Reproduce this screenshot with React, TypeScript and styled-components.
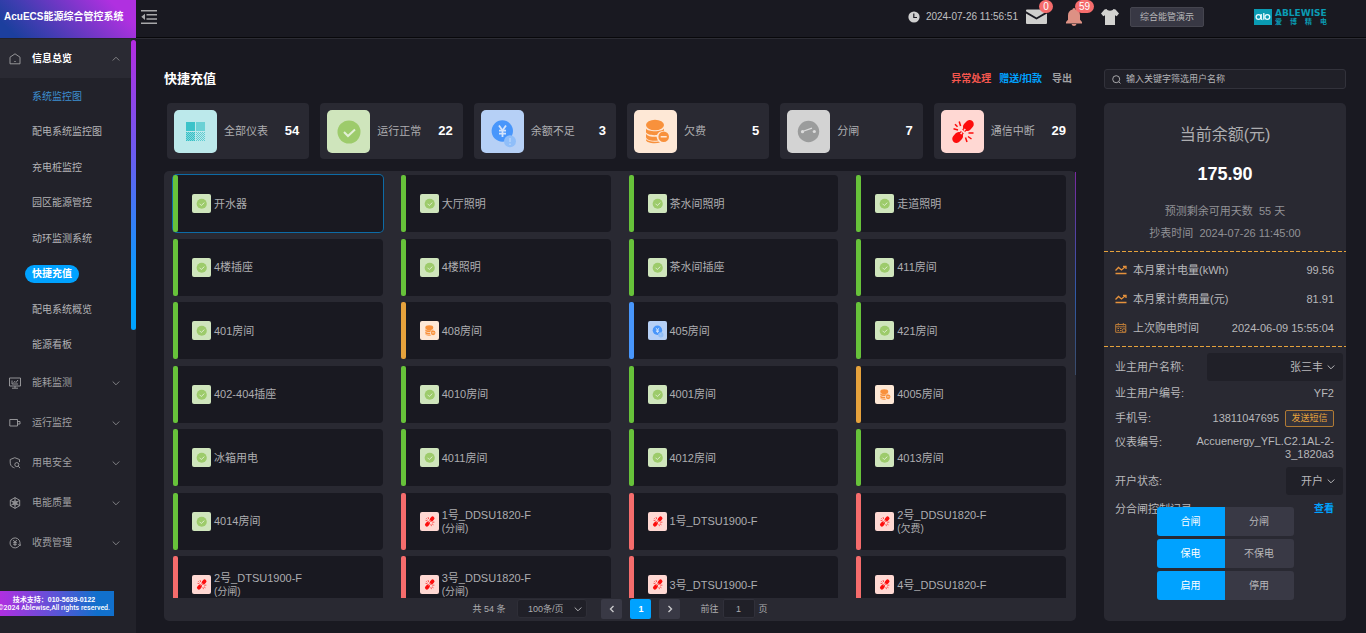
import React from "react";
import styled, { createGlobalStyle, css } from "styled-components";

type Kind = "all" | "ok" | "low" | "debt" | "open" | "lost";

const GlobalStyle = createGlobalStyle`
  *, *::before, *::after { box-sizing: border-box; }
  body {
    margin: 0;
    background: #191921;
    color: #adadb0;
    font-family: "Liberation Sans", "Noto Sans CJK SC", sans-serif;
    font-size: 11px;
    line-height: 14px;
  }
  h1, h2, p, ul, dl, dd, dt { margin: 0; padding: 0; font-weight: normal; }
  ul { list-style: none; }
  a { color: inherit; text-decoration: none; }
  button, input, select { font: inherit; color: inherit; margin: 0; padding: 0; border: 0; outline: 0; }
  button { cursor: pointer; }
  svg { display: block; flex: none; }
`;

const Shell = styled.div`
  display: grid;
  grid-template: 38px minmax(0, 1fr) / 136px minmax(0, 1fr);
  height: 100vh;
  min-height: 630px;
`;

/* Header */

const Brand = styled.h1`
  display: flex;
  align-items: center;
  padding: 0 4px 4px;
  background: linear-gradient(45deg, #1c3f9e 10%, #3f3db0 30%, #b030e0 85%);
  color: #fff;
  font-size: 10px;
  font-weight: bold;
  white-space: nowrap;
`;

const TopBar = styled.header`
  display: flex;
  align-items: center;
  padding: 0 39px 3px 5px;
  border-bottom: 1px solid #08080b;
`;

const IconButton = styled.button`
  position: relative;
  display: flex;
  align-items: center;
  height: 18px;
  background: none;
`;

const Badge = styled.span`
  position: absolute;
  left: 13px;
  top: -8px;
  min-width: 14px;
  padding: 0 4px;
  border-radius: 7px;
  background: #f56c6c;
  color: #fff;
  font-size: 10px;
  line-height: 13px;
  text-align: center;
`;

const BellBadge = styled(Badge)`
  left: 9px;
`;

const Clock = styled.time`
  display: flex;
  align-items: center;
  gap: 6px;
  margin-left: auto;
  margin-right: 8px;
  font-size: 10px;
  color: #c0c0c2;
`;

const Tools = styled.div`
  display: flex;
  align-items: center;
  gap: 19px;
`;

const Account = styled.button`
  width: 74px;
  height: 20px;
  margin: 0 50px 0 11px;
  border: 1px solid #45454f;
  border-radius: 2px;
  background: #383844;
  color: #b8b8ba;
  font-size: 9px;
  line-height: 18px;
`;

const Logo = styled.div`
  display: flex;
  align-items: center;
  gap: 3px;
  color: #0a9bb3;
`;

const LogoText = styled.div`
  width: 52px;
  font: bold 9px/9px "DejaVu Sans", sans-serif;
`;

const LogoSub = styled.div`
  display: flex;
  justify-content: space-between;
  font: bold 7px/7px "Noto Sans CJK SC", sans-serif;
`;

/* Sidebar */

const Sidebar = styled.nav`
  position: relative;
  display: flex;
  flex-direction: column;
  padding-top: 1px;
  background: #22222a;
  font-size: 10px;
`;

const SideScroll = styled.span`
  position: absolute;
  right: 0;
  top: 2px;
  width: 5px;
  height: 290px;
  border-radius: 3px;
  background: linear-gradient(#b52be0, #6a5cf0 40%, #00a2ff 85%);
`;

const Group = styled.button<{ $open?: boolean }>`
  display: grid;
  grid-template-columns: 23px 1fr 8px;
  align-items: center;
  width: 131px;
  height: ${(p) => (p.$open ? 39 : 40)}px;
  padding: 0 11px 0 9px;
  background: ${(p) => (p.$open ? "#2a2a33" : "none")};
  color: ${(p) => (p.$open ? "#fff" : "#a0a0a3")};
  font-weight: ${(p) => (p.$open ? "bold" : "normal")};
  text-align: left;
`;

const SubMenu = styled.ul`
  display: grid;
  grid-auto-rows: 1fr;
  align-items: center;
  height: 285px;
  padding: 1px 0 0 25px;
`;

const SubLink = styled.a<{ $state?: "link" | "active" }>`
  display: inline-block;
  padding: 0 7px;
  border-radius: 9px;
  line-height: 18px;
  color: #b4b4b7;
  ${(p) => p.$state === "link" && css`color: #3d8fd0;`}
  ${(p) => p.$state === "active" && css`background: #00a2ff; color: #fff; font-weight: bold;`}
`;

const Support = styled.footer`
  display: flex;
  flex-direction: column;
  align-items: center;
  width: 114px;
  margin: auto 0 17px;
  padding: 5px 6px 4px 0;
  background: linear-gradient(90deg, #b02fe0, #5a55d6 50%, #1170cc 85%);
  color: #fff;
  font-size: 7px;
  font-weight: bold;
  line-height: 8px;
  white-space: nowrap;
`;

const Rights = styled.span`
  font-family: Roboto, sans-serif;
  font-weight: 500;
`;

/* Content */

const Main = styled.main`
  display: grid;
  grid-template: 20px minmax(0, 1fr) / minmax(0, 1fr) 242px;
  gap: 14px 28px;
  padding: 30px 20px 12px 28px;
  border-top: 1px solid #2c2c34;
`;

const Heading = styled.div`
  display: flex;
  align-items: center;
  gap: 8px;
  padding-right: 4px;
`;

const Title = styled.h2`
  margin-right: auto;
  color: #fff;
  font-size: 13px;
  font-weight: bold;
`;

const Action = styled.button<{ $color: string }>`
  background: none;
  color: ${(p) => p.$color};
  font-size: 10px;
  font-weight: bold;
  &:last-child { margin-left: 2px; }
`;

const Search = styled.label`
  display: flex;
  align-items: center;
  gap: 5px;
  padding: 0 7px;
  border: 1px solid #32323b;
  border-radius: 3px;
  background: #202028;
  font-size: 9px;
  input { flex: 1; min-width: 0; background: none; }
  input::placeholder { color: #b4b4b7; opacity: 1; }
`;

const Left = styled.div`
  display: flex;
  flex-direction: column;
  gap: 12px;
  min-height: 0;
`;

const Summary = styled.ul`
  display: grid;
  grid-template-columns: repeat(6, 1fr);
  gap: 11px;
  padding-left: 3px;
`;

const SummaryCard = styled.li`
  display: flex;
  align-items: center;
  gap: 7px;
  height: 56px;
  padding: 0 10px 0 7px;
  border-radius: 4px;
  background: #292932;
  white-space: nowrap;
`;

const Count = styled.b`
  margin-left: auto;
  color: #fff;
  font-size: 13px;
`;

const tileColor: Record<Kind, string> = {
  all: "#bce9eb",
  ok: "#cfe5bc",
  low: "#b6d0f6",
  debt: "#fee8d6",
  open: "#d3d3d3",
  lost: "#ffd8d3",
};

const Tile = styled.span<{ $kind: Kind; $small?: boolean }>`
  flex: none;
  width: ${(p) => (p.$small ? 19 : 43)}px;
  height: ${(p) => (p.$small ? 19 : 43)}px;
  border-radius: ${(p) => (p.$small ? 2 : 5)}px;
  background: ${(p) => tileColor[p.$kind]};
  svg { width: 100%; height: 100%; }
`;

const Panel = styled.section`
  position: relative;
  display: flex;
  flex: 1;
  flex-direction: column;
  min-height: 0;
  border-radius: 5px;
  background: #292932;
`;

const PanelScroll = styled.span`
  position: absolute;
  right: 0;
  top: 1px;
  width: 1px;
  height: 203px;
  background: linear-gradient(#7a28a0, #2f5aa8 60%, #3a4a66);
`;

const Scroller = styled.div`
  flex: 1;
  min-height: 0;
  overflow: hidden;
  padding: 4px 10px 0 9px;
`;

const Meters = styled.ul`
  display: grid;
  grid-template-columns: repeat(4, 1fr);
  grid-template-rows: repeat(7, 57px);
  align-content: space-between;
  column-gap: 18px;
  height: 438px;
`;

const barColor: Record<Kind, string> = {
  all: "#3cc3c9",
  ok: "#67c23a",
  low: "#4896fb",
  debt: "#e6a23c",
  open: "#909399",
  lost: "#f56c6c",
};

const Meter = styled.button<{ $kind: Kind; $on?: boolean }>`
  display: flex;
  align-items: center;
  gap: 3px;
  width: 100%;
  height: 57px;
  border-radius: 4px;
  background: #191921;
  text-align: left;
  box-shadow: ${(p) => (p.$on ? "0 0 0 1px #0d6ba6" : "none")};
  &::before {
    content: "";
    align-self: stretch;
    width: 5px;
    margin-right: 11px;
    border-radius: 2px;
    background: ${(p) => barColor[p.$kind]};
  }
`;

const MeterNote = styled.small`
  display: block;
  font-size: 10px;
  line-height: 13px;
`;

const Pager = styled.div`
  display: flex;
  align-items: center;
  justify-content: center;
  height: 23px;
  padding-bottom: 2px;
  font-size: 9px;
`;

const PageButton = styled.button<{ $on?: boolean }>`
  display: flex;
  align-items: center;
  justify-content: center;
  width: 21px;
  height: 20px;
  margin-right: 8px;
  border-radius: 2px;
  background: ${(p) => (p.$on ? "#00a2ff" : "#393945")};
  color: ${(p) => (p.$on ? "#fff" : "#c8c8ca")};
  font-weight: bold;
`;

const PageInput = styled.input`
  width: 32px;
  height: 19px;
  margin: 0 4px;
  border: 1px solid #30303a;
  border-radius: 2px;
  background: #202028;
  text-align: center;
`;

const GoTo = styled.label`
  margin-left: 12px;
`;

const Pick = styled.span<{ $w: number; $h: number }>`
  position: relative;
  display: block;
  width: ${(p) => p.$w}px;
  select {
    width: 100%;
    height: ${(p) => p.$h}px;
    padding: 0 20px 0 6px;
    border-radius: 3px;
    background: #202028;
    appearance: none;
    text-align-last: right;
  }
  svg {
    position: absolute;
    right: 8px;
    top: 50%;
    margin-top: -4px;
    pointer-events: none;
  }
`;

const PageSize = styled(Pick)`
  margin: 0 14px 0 12px;
  select { padding-right: 23px; border: 1px solid #2e2e37; }
  svg { right: 5px; }
`;

/* Balance card */

const Detail = styled.aside`
  position: relative;
  border-radius: 5px;
  background: #292932;
`;

const dashedRule = css`
  background: repeating-linear-gradient(90deg, #e6a23c 0 4px, transparent 4px 6px) left bottom / 100% 1px no-repeat;
`;

const Hero = styled.div`
  padding: 21px 0 8px;
  text-align: center;
  color: #919196;
  line-height: 22px;
  ${dashedRule}
`;

const HeroTitle = styled.h2`
  color: #adadb0;
  font-size: 16px;
`;

const Balance = styled.p`
  margin: 16px 0 14px;
  color: #fff;
  font-size: 18px;
  font-weight: bold;
  line-height: 24px;
`;

const Stats = styled.dl`
  padding: 3px 12px 5px 11px;
  ${dashedRule}
`;

const Stat = styled.div`
  display: flex;
  align-items: center;
  gap: 6px;
  height: 29px;
  color: #b8b8bb;
  dd { margin-left: auto; }
`;

const Form = styled.div`
  padding: 6px 0 0 11px;
  color: #b8b8bb;
`;

const Field = styled.div<{ $h: number; $flush?: boolean }>`
  display: flex;
  align-items: center;
  justify-content: space-between;
  gap: 6px;
  height: ${(p) => p.$h}px;
  padding-right: ${(p) => (p.$flush ? 3 : 12)}px;
  white-space: nowrap;
`;

const TopField = styled(Field)`
  align-items: flex-start;
  padding-top: 4px;
`;

const MeterNo = styled.span`
  width: 146px;
  line-height: 13px;
  text-align: right;
  white-space: normal;
`;

const Phone = styled.span`
  margin-left: auto;
`;

const Sms = styled.button`
  width: 49px;
  height: 17px;
  border: 1px solid #b07a34;
  border-radius: 2px;
  background: #33323a;
  color: #e6a23c;
  font-size: 9px;
  line-height: 15px;
`;

const View = styled.a`
  color: #00a2ff;
  font-size: 10px;
  font-weight: bold;
`;

const Switches = styled.div`
  position: absolute;
  left: 0;
  right: 0;
  bottom: 21px;
  display: grid;
  gap: 3px;
  justify-content: center;
`;

const SwitchPair = styled.div`
  display: grid;
  grid-template-columns: 68px 69px;
  height: 29px;
  border-radius: 3px;
  overflow: hidden;
`;

const Half = styled.button<{ $on?: boolean }>`
  background: ${(p) => (p.$on ? "#00a2ff" : "#393945")};
  color: ${(p) => (p.$on ? "#fff" : "#b8b8bb")};
  font-size: 10px;
`;

/* Drawings */

const glyphs: Record<Kind, React.ReactNode> = {
  all: (
    <>
      <defs>
        <pattern id="weave" width="2" height="2" patternUnits="userSpaceOnUse">
          <rect width="1" height="1" fill="#35bfc6" />
          <rect x="1" y="1" width="1" height="1" fill="#35bfc6" />
        </pattern>
      </defs>
      <rect x="12" y="12" width="9" height="9" fill="#3cc3c9" />
      <rect x="22" y="12" width="9" height="9" fill="#6bd1d5" />
      <rect x="12" y="22" width="9" height="9" fill="#7fd8db" />
      <rect x="12" y="22" width="9" height="9" fill="url(#weave)" />
      <rect x="22" y="22" width="9" height="9" fill="url(#weave)" opacity=".7" />
    </>
  ),
  ok: (
    <>
      <circle cx="22" cy="22" r="11.5" fill="#9dcb6b" />
      <path d="M17 22l4 4 7-6.5" fill="none" stroke="#e3f0d6" strokeWidth="2" />
    </>
  ),
  low: (
    <>
      <circle cx="21.3" cy="21" r="10.7" fill="#4896fb" />
      <path d="M18 15.5l3.5 5 3.5-5M21.5 20.5v6.5M18 20.7h7M18 23.7h7" fill="none" stroke="#d5e4fb" strokeWidth="1.8" />
      <circle cx="29" cy="31.3" r="6" fill="#8fbef9" />
      <path d="M29 28v4M29 33.4v1.6" stroke="#b6d4fb" strokeWidth="1.4" />
    </>
  ),
  debt: (
    <g fill="#f8913c">
      <ellipse cx="21" cy="15" rx="9" ry="5.2" />
      <path d="M12 18.5c2 3.6 16 3.6 18 0v2.2c-4 .2-6.3 2-7 4.3-5 .6-11-.6-11-3z" />
      <path d="M12 24c1.5 2.3 6 3 10.6 2.8.1 1.500.6 2.700 1.400 3.700C18 31.500 12 30 12 27z" />
      <path d="M12 29.300c2 2 7 3 12.500 2.200.8.700 1 .8 1.800 1C21 34 12 33 12 30z" />
      <path fillRule="evenodd" d="M29.700 21.400a5.300 5.300 0 1 1 0 10.600 5.300 5.300 0 0 1 0-10.600zM26.700 26v1.600h6V26z" />
    </g>
  ),
  open: (
    <>
      <circle cx="21.5" cy="21.5" r="10.7" fill="#9b9c9c" />
      <path d="M15.5 21.5l9.5-3.300" stroke="#dcdcdc" strokeWidth="1.3" />
      <circle cx="15.5" cy="21.7" r="1.6" fill="#dcdcdc" />
      <circle cx="27.3" cy="21.5" r="1.6" fill="#dcdcdc" />
    </>
  ),
  lost: (
    <>
      <g transform="rotate(-48 22 21.5)">
        <rect x="24" y="17.300" width="12" height="8.400" rx="4.200" fill="#fd0d0d" />
        <rect x="8" y="17.300" width="12" height="8.400" rx="4.200" fill="#fd0d0d" />
        <path d="M18 21.500h3M23 21.500h3" stroke="#fd0d0d" strokeWidth="4" />
        <path d="M18.500 21.500h2M23.500 21.500h2" stroke="#ffd8d3" strokeWidth="1.500" />
      </g>
      <path d="M18.200 11.500l1.400 4.500M12.500 18.800l4.500 1.200M14 14.200l2.500 2.500M27.500 23h5M27 26.500l3.500 2.500M24.500 27.500l1.500 4.500" stroke="#fd0d0d" strokeWidth="1.500" fill="none" />
    </>
  ),
};

const StateIcon = ({ kind, small }: { kind: Kind; small?: boolean }) => (
  <Tile $kind={kind} $small={small}>
    <svg viewBox="0 0 43 43" aria-hidden="true">{glyphs[kind]}</svg>
  </Tile>
);

const Chevron = ({ up, color = "#808084" }: { up?: boolean; color?: string }) => (
  <svg width="8" height="8" viewBox="0 0 8 8" fill="none" stroke={color} aria-hidden="true">
    <path d={up ? "M.7 5.5L4 2.200l3.300 3.300" : "M.7 2.500L4 5.800l3.300-3.300"} />
  </svg>
);

const Arrow = ({ right }: { right?: boolean }) => (
  <svg width="8" height="8" viewBox="0 0 8 8" fill="none" stroke="currentColor" strokeWidth="1.4" aria-hidden="true">
    <path d={right ? "M2.500 1l3 3-3 3" : "M5.500 1l-3 3 3 3"} />
  </svg>
);

const NavIcon = ({ children }: { children: React.ReactNode }) => (
  <svg width="12" height="12" viewBox="0 0 12 12" fill="none" stroke="#a0a0a3" strokeWidth=".9" aria-hidden="true">{children}</svg>
);

const Trend = () => (
  <svg width="12" height="10" viewBox="0 0 12 10" fill="none" stroke="#e6923c" aria-hidden="true">
    <path d="M.5 5.500L3.500 2.500l3 2.500 4-3.500M8 1.300h3v2.600M.5 8.500h11" strokeWidth="1.300" />
  </svg>
);

const Calendar = () => (
  <svg width="12" height="10" viewBox="0 0 12 10" fill="none" stroke="#b87a38" aria-hidden="true">
    <path d="M.7 1.500h10.100v7.800H.7zM.7 3.800h10M3.300 0v2.500M8.300 0v2.500M2.500 5.500h1.500M5 5.500h1.500M2.500 7.500h1.500M5 7.500h1.500" />
    <circle cx="9" cy="7.500" r="1.800" />
  </svg>
);

/* Data */

const subItems: { text: string; state?: "link" | "active" }[] = [
  { text: "系统监控图", state: "link" },
  { text: "配电系统监控图" },
  { text: "充电桩监控" },
  { text: "园区能源管控" },
  { text: "动环监测系统" },
  { text: "快捷充值", state: "active" },
  { text: "配电系统概览" },
  { text: "能源看板" },
];

const groups: [string, React.ReactNode][] = [
  ["能耗监测", <path key="a" d="M.5 1h11v8H.5zM6 9v2M3 11.200h6M3 3.500v3.500h6M4.500 5.500l1.500-1 1 1L9 3" />],
  ["运行监控", <path key="b" d="M.8 2.500h7.700v6.500H.8zM8.500 4.500h2.500v2.500H8.500" />],
  ["用电安全", <g key="c"><path d="M4.500 10.500C2 9.500 1.200 7.500 1.200 5V2.500l4.600-1.800 4.700 1.800V5M4.500 10.500l1 .4" /><circle cx="7.800" cy="7.600" r="2" /><path d="M9.300 9.200l1.700 1.900" /></g>],
  ["电能质量", <g key="d"><path d="M6 .6l4.700 2.700v5.400L6 11.400 1.300 8.700V3.300z" /><path d="M6 .6v10.800M1.300 3.300l9.400 5.400M10.700 3.300L1.300 8.700" /><circle cx="6" cy="6" r="2" /></g>],
  ["收费管理", <g key="e"><path d="M10.300 8.500A5 5 0 1 1 11 5.500v3M9.300 7.300l1.700 1.500 1-1.500M4.300 3l1.700 2.300L7.700 3M6 5.300V9M4.200 5.600h3.600M4.200 7.300h3.600" /></g>],
];

const summary: [Kind, string, number][] = [
  ["all", "全部仪表", 54],
  ["ok", "运行正常", 22],
  ["low", "余额不足", 3],
  ["debt", "欠费", 5],
  ["open", "分闸", 7],
  ["lost", "通信中断", 29],
];

const meters: [string, Kind, string?][] = [
  ["开水器", "ok"], ["大厅照明", "ok"], ["茶水间照明", "ok"], ["走道照明", "ok"],
  ["4楼插座", "ok"], ["4楼照明", "ok"], ["茶水间插座", "ok"], ["411房间", "ok"],
  ["401房间", "ok"], ["408房间", "debt"], ["405房间", "low"], ["421房间", "ok"],
  ["402-404插座", "ok"], ["4010房间", "ok"], ["4001房间", "ok"], ["4005房间", "debt"],
  ["冰箱用电", "ok"], ["4011房间", "ok"], ["4012房间", "ok"], ["4013房间", "ok"],
  ["4014房间", "ok"], ["1号_DDSU1820-F", "lost", "(分闸)"], ["1号_DTSU1900-F", "lost"], ["2号_DDSU1820-F", "lost", "(欠费)"],
  ["2号_DTSU1900-F", "lost", "(分闸)"], ["3号_DDSU1820-F", "lost", "(分闸)"], ["3号_DTSU1900-F", "lost"], ["4号_DDSU1820-F", "lost"],
];

const switches = [["合闸", "分闸"], ["保电", "不保电"], ["启用", "停用"]];

export default function App() {
  return (
    <>
      <GlobalStyle />
      <Shell>
        <Brand>AcuECS能源综合管控系统</Brand>
        <TopBar>
          <IconButton aria-label="收起菜单">
            <svg width="16" height="14" viewBox="0 0 16 14" fill="#a8a8aa">
              <path d="M0 0h16v1.500H0zM5.500 4h10.500v1.500H5.500zM5.500 8.300h10.500v1.500H5.500zM0 12.500h16V14H0zM4 3.700v6.200L.3 6.800z" />
            </svg>
          </IconButton>
          <Clock>
            <svg width="12" height="12" viewBox="0 0 12 12">
              <circle cx="6" cy="6" r="5.600" fill="#d0d0d0" />
              <path d="M5.800 2.500v4h3.200" fill="none" stroke="#191921" strokeWidth="1.200" />
            </svg>
            2024-07-26 11:56:51
          </Clock>
          <Tools>
            <IconButton aria-label="消息">
              <svg width="21" height="16" viewBox="0 0 21 16" fill="#cfcfcd">
                <path d="M0 1.500Q0 .5 1 .5h19q1 0 1 1v.8L10.500 8.500 0 2.300zM0 4.500l10.500 6L21 4.500V14q0 1-1 1H1q-1 0-1-1z" />
              </svg>
              <Badge>0</Badge>
            </IconButton>
            <IconButton aria-label="告警">
              <svg width="16" height="18" viewBox="0 0 16 18" fill="#dd9184">
                <path d="M8 0q1.500 0 1.500 1.600C12.500 2.300 14 4.600 14 7.500v4.200l2 2.300v1.500H0V14l2-2.300V7.500c0-2.900 1.500-5.200 4.500-5.900Q6.500 0 8 0zM5.500 16h5Q10 18 8 18t-2.500-2z" />
              </svg>
              <BellBadge>59</BellBadge>
            </IconButton>
            <IconButton aria-label="换肤">
              <svg width="18" height="16" viewBox="0 0 18 16" fill="#d2d2d0">
                <path d="M5.500 0C6.500 2.200 11.500 2.200 12.500 0l2 .6L18 4.500l-2.300 2.800-1.700-1V16H4V6.300l-1.700 1L0 4.500 3.500.6z" />
              </svg>
            </IconButton>
          </Tools>
          <Account>综合能管演示</Account>
          <Logo>
            <svg width="18" height="16" viewBox="0 0 18 16" fill="none" stroke="#e8fbff" strokeWidth="1.300">
              <rect width="18" height="16" fill="#0a9bb3" stroke="none" />
              <circle cx="4.500" cy="8" r="2.400" />
              <path d="M7.200 5v4.500q0 1 1.200 1M9.800 4v6.800" />
              <circle cx="13.300" cy="8" r="2.400" />
            </svg>
            <LogoText>
              ABLEWISE
              <LogoSub><span>爱</span><span>博</span><span>精</span><span>电</span></LogoSub>
            </LogoText>
          </Logo>
        </TopBar>

        <Sidebar>
          <Group $open>
            <NavIcon><path d="M1 4.200L6 .8l5 3.400v6.600H1zM5.300 8.500h1.400" /></NavIcon>
            信息总览
            <Chevron up />
          </Group>
          <SubMenu>
            {subItems.map((s) => (
              <li key={s.text}><SubLink href="#" $state={s.state}>{s.text}</SubLink></li>
            ))}
          </SubMenu>
          {groups.map(([name, icon]) => (
            <Group key={name}>
              <NavIcon>{icon}</NavIcon>
              {name}
              <Chevron />
            </Group>
          ))}
          <Support>
            <span>技术支持：010-5639-0122</span>
            <Rights>©2024 Ablewise,All rights reserved.</Rights>
          </Support>
          <SideScroll />
        </Sidebar>

        <Main>
          <Heading>
            <Title>快捷充值</Title>
            <Action $color="#f4564e">异常处理</Action>
            <Action $color="#00a2ff">赠送/扣款</Action>
            <Action $color="#a0a0a3">导出</Action>
          </Heading>
          <Search>
            <svg width="9" height="9" viewBox="0 0 9 9" fill="none" stroke="#b4b4b7" strokeWidth=".9" aria-hidden="true">
              <circle cx="4.200" cy="4.200" r="3.500" />
              <path d="M6.800 6.800l1.700 1.700" />
            </svg>
            <input type="text" aria-label="筛选用户" placeholder="输入关键字筛选用户名称" />
          </Search>

          <Left>
            <Summary>
              {summary.map(([kind, name, n]) => (
                <SummaryCard key={kind}>
                  <StateIcon kind={kind} />
                  <span>{name}</span>
                  <Count>{n}</Count>
                </SummaryCard>
              ))}
            </Summary>
            <Panel>
              <Scroller>
                <Meters>
                  {meters.map(([name, kind, note], i) => (
                    <li key={name}>
                      <Meter $kind={kind} $on={i === 0}>
                        <StateIcon kind={kind} small />
                        <span>
                          {name}
                          {note && <MeterNote>{note}</MeterNote>}
                        </span>
                      </Meter>
                    </li>
                  ))}
                </Meters>
              </Scroller>
              <Pager>
                <span>共 54 条</span>
                <PageSize $w={70} $h={19}>
                  <select aria-label="每页条数"><option>100条/页</option></select>
                  <Chevron color="#b0b0b3" />
                </PageSize>
                <PageButton aria-label="上一页"><Arrow /></PageButton>
                <PageButton $on>1</PageButton>
                <PageButton aria-label="下一页"><Arrow right /></PageButton>
                <GoTo>前往<PageInput type="text" defaultValue="1" />页</GoTo>
              </Pager>
              <PanelScroll />
            </Panel>
          </Left>

          <Detail>
            <Hero>
              <HeroTitle>当前余额(元)</HeroTitle>
              <Balance>175.90</Balance>
              <p>预测剩余可用天数&nbsp; 55 天</p>
              <p>抄表时间&nbsp; 2024-07-26 11:45:00</p>
            </Hero>
            <Stats>
              <Stat><Trend /><dt>本月累计电量(kWh)</dt><dd>99.56</dd></Stat>
              <Stat><Trend /><dt>本月累计费用量(元)</dt><dd>81.91</dd></Stat>
              <Stat><Calendar /><dt>上次购电时间</dt><dd>2024-06-09 15:55:04</dd></Stat>
            </Stats>
            <Form>
              <Field $h={28} $flush>
                <label htmlFor="owner">业主用户名称:</label>
                <Pick $w={136} $h={28}>
                  <select id="owner"><option>张三丰</option></select>
                  <Chevron color="#b8b8bb" />
                </Pick>
              </Field>
              <Field $h={24}><span>业主用户编号:</span><span>YF2</span></Field>
              <Field $h={26}><span>手机号:</span><Phone>13811047695</Phone><Sms>发送短信</Sms></Field>
              <TopField $h={36}><span>仪表编号:</span><MeterNo>Accuenergy_YFL.C2.1AL-2-3_1820a3</MeterNo></TopField>
              <Field $h={28} $flush>
                <label htmlFor="account">开户状态:</label>
                <Pick $w={57} $h={28}>
                  <select id="account"><option>开户</option></select>
                  <Chevron color="#b8b8bb" />
                </Pick>
              </Field>
              <Field $h={28}><span>分合闸控制记录:</span><View href="#">查看</View></Field>
            </Form>
            <Switches>
              {switches.map(([on, off]) => (
                <SwitchPair key={on}>
                  <Half $on>{on}</Half>
                  <Half>{off}</Half>
                </SwitchPair>
              ))}
            </Switches>
          </Detail>
        </Main>
      </Shell>
    </>
  );
}
